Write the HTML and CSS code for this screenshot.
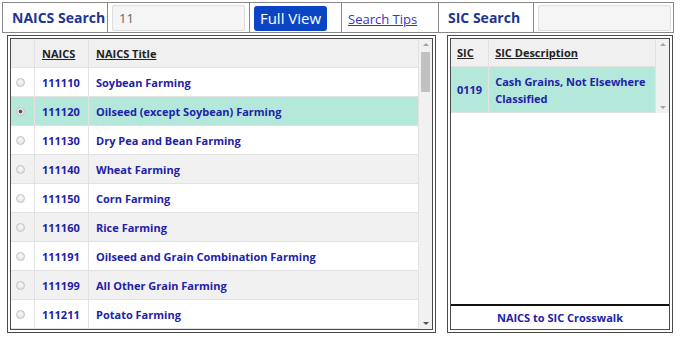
FILE: index.html
```html
<!DOCTYPE html>
<html lang="en">
<head>
    <meta charset="UTF-8">
    <title>NAICS Search</title>
    <link rel="stylesheet" href="styles.css">
</head>
<body>
    <table class="searchbar">
        <colgroup>
            <col style="width:105px"><col style="width:142px"><col style="width:92px">
            <col style="width:97px"><col style="width:95px"><col style="width:140px">
        </colgroup>
        <tr>
            <td class="label-cell">NAICS Search</td>
            <td class="input-cell"><input type="text" value="11"></td>
            <td class="button-cell"><button type="button">Full View</button></td>
            <td class="tips-cell"><a href="#">Search Tips</a></td>
            <td class="label-cell">SIC Search</td>
            <td class="input-cell"><input type="text" value=""></td>
        </tr>
    </table>

    <div class="main">
        <div class="panel naics-panel">
            <div class="list naics-list">
                <table class="grid">
                    <tr class="head"><th class="radio-col"></th><th class="code-col">NAICS</th><th>NAICS Title</th></tr>
                    <tr><td class="radio-col"><input type="radio" name="n"></td><td>111110</td><td>Soybean Farming</td></tr>
                    <tr class="selected"><td class="radio-col"><input type="radio" name="n" checked></td><td>111120</td><td>Oilseed (except Soybean) Farming</td></tr>
                    <tr><td class="radio-col"><input type="radio" name="n"></td><td>111130</td><td>Dry Pea and Bean Farming</td></tr>
                    <tr><td class="radio-col"><input type="radio" name="n"></td><td>111140</td><td>Wheat Farming</td></tr>
                    <tr><td class="radio-col"><input type="radio" name="n"></td><td>111150</td><td>Corn Farming</td></tr>
                    <tr><td class="radio-col"><input type="radio" name="n"></td><td>111160</td><td>Rice Farming</td></tr>
                    <tr><td class="radio-col"><input type="radio" name="n"></td><td>111191</td><td>Oilseed and Grain Combination Farming</td></tr>
                    <tr><td class="radio-col"><input type="radio" name="n"></td><td>111199</td><td>All Other Grain Farming</td></tr>
                    <tr><td class="radio-col"><input type="radio" name="n"></td><td>111211</td><td>Potato Farming</td></tr>
                </table>
            </div>
            <div class="vscroll">
                <span class="arrow up"></span>
                <span class="track"><span class="thumb"></span></span>
                <span class="arrow down"></span>
            </div>
        </div>

        <div class="panel sic-panel">
            <div class="list sic-list">
                <table class="grid sic-grid">
                    <tr class="head"><th class="sic-col">SIC</th><th>SIC Description</th></tr>
                    <tr class="selected"><td class="sic-col">0119</td><td>Cash Grains, Not Elsewhere Classified</td></tr>
                </table>
                <div class="vscroll">
                    <span class="arrow up"></span>
                    <span class="track"></span>
                    <span class="arrow down light"></span>
                </div>
            </div>
            <div class="spacer"></div>
            <div class="crosswalk">NAICS to SIC Crosswalk</div>
        </div>
    </div>
</body>
</html>
```

FILE: styles.css
```css
body {
    margin: 0;
    font-family: "Open Sans", "Noto Sans", sans-serif;
    background-color: white;
}
.searchbar {
    margin: 2px 0 0 2px;
    width: 671px;
    height: 31px;
    table-layout: fixed;
    border-collapse: collapse;
    border: 1px solid #888;
}
.searchbar td {
    border: 1px solid #888;
    padding: 0 4px;
    white-space: nowrap;
}
.label-cell {
    font-size: 14px;
    font-weight: bold;
    color: #1d3592;
}
.searchbar td.label-cell {
    padding-left: 9px;
}
.searchbar input {
    width: 133px;
    height: 26px;
    box-sizing: border-box;
    border: 1px solid #ddd;
    border-radius: 2px;
    background-color: #f5f5f5;
    font-family: "Open Sans", sans-serif;
    font-size: 13px;
    color: #666;
    padding: 0 6px;
}
.searchbar td.input-cell {
    padding-left: 4px;
}
.searchbar button {
    width: 73px;
    height: 25px;
    margin-top: 1px;
    background-color: #0b45c4;
    color: white;
    border: none;
    border-radius: 3px;
    font-family: "Open Sans", sans-serif;
    font-size: 15px;
    padding: 0;
}
.searchbar td.tips-cell {
    padding-left: 6px;
}
.tips-cell a {
    color: #3434c4;
    font-size: 13px;
}
.main {
    display: flex;
    gap: 11px;
    margin: 2px 0 0 7px;
    height: 298px;
}
.panel {
    border: 4px double #4a4a4a;
    background: white;
}
.naics-panel {
    width: 421px;
    display: flex;
}
.sic-panel {
    width: 218px;
    display: flex;
    flex-direction: column;
}
.list {
    overflow: hidden;
}
.naics-list {
    flex: 1;
    height: 290px;
}
.sic-list {
    display: flex;
    height: 74px;
}
.vscroll {
    width: 13px;
    display: flex;
    flex-direction: column;
    background-color: #f1f1f1;
}
.arrow {
    height: 11px;
    display: flex;
    align-items: center;
    justify-content: center;
}
.arrow::after {
    content: "";
    border-left: 3px solid transparent;
    border-right: 3px solid transparent;
}
.arrow.up::after {
    border-bottom: 3px solid #a3a3a3;
}
.arrow.down::after {
    border-top: 3px solid #505050;
}
.arrow.down.light::after {
    border-top-color: #a3a3a3;
}
.track {
    flex: 1;
    padding: 2px 2px 0;
}
.thumb {
    display: block;
    height: 40px;
    background-color: #c1c1c1;
}
.grid {
    flex: 1;
    width: 100%;
    border-collapse: collapse;
    font-size: 11px;
    font-weight: bold;
}
.grid th {
    text-align: left;
    color: #222;
    text-decoration: underline;
    background-color: #f0f0f0;
    height: 28px;
    padding: 0 7px;
    border-right: 1px solid #e2e2e2;
    border-bottom: 1px solid #e2e2e2;
}
.grid td {
    color: #2121a8;
    height: 28px;
    padding: 0 7px;
    border-right: 1px solid #e2e2e2;
    border-bottom: 1px solid #e2e2e2;
}
.grid tr:nth-child(odd) td {
    background-color: #f1f1f1;
}
.grid tr.selected td {
    background-color: #b3e8da;
}
.radio-col {
    width: 8px;
}
.grid td.radio-col {
    padding: 0 9px 0 5px;
}
.code-col {
    width: 39px;
}
input[type="radio"] {
    appearance: none;
    display: block;
    margin: 0;
    width: 9px;
    height: 9px;
    border-radius: 50%;
    border: 1px solid #c4c4c4;
    background: radial-gradient(circle at 50% 40%, #fafafa, #dcdcdc);
}
input[type="radio"]:checked {
    background: radial-gradient(circle, #555 0, #555 1.6px, #e4e4e4 2.2px);
}
.sic-grid th {
    height: 27px;
    padding: 0 6px;
}
.sic-grid td {
    height: 45px;
    line-height: 17px;
    padding: 0 6px;
}
.sic-col {
    width: 24px;
}
.spacer {
    flex: 1;
}
.crosswalk {
    border-top: 2px solid #111;
    height: 23px;
    line-height: 23px;
    text-align: center;
    font-size: 11px;
    font-weight: bold;
    color: #2121a8;
}
```
